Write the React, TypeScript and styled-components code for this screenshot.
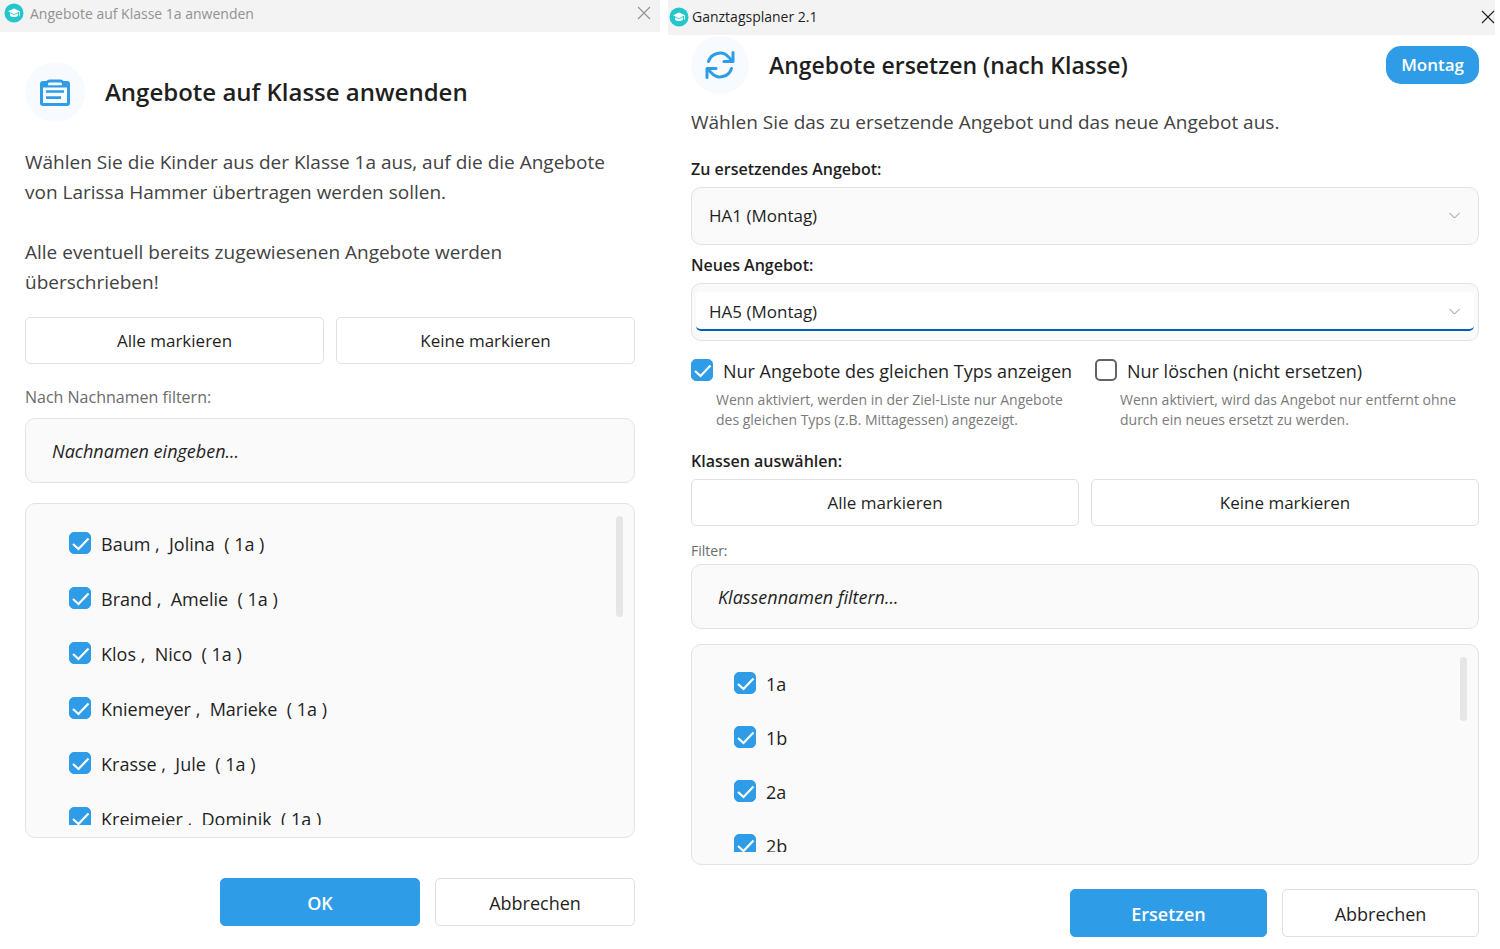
import React, { useState } from "react";
import styled, { createGlobalStyle, css } from "styled-components";

const GlobalStyle = createGlobalStyle`
  *, *::before, *::after { box-sizing: border-box; }
  body {
    margin: 0;
    background: #fff;
    color: #1f1f1f;
    font-family: "Segoe UI", "Open Sans", "Noto Sans", sans-serif;
  }
  button, input, select { font-family: inherit; color: inherit; }
  h1, p { margin: 0; }
`;

const blue = "#2e9ce6";

const Page = styled.main`
  display: grid;
  grid-template-columns: 660fr 827fr;
  gap: 8px;
  padding-right: 5px;
  align-items: start;
`;

const Window = styled.section`
  display: flex;
  flex-direction: column;
  min-width: 0;
`;

const TitleBar = styled.header<{ $active?: boolean }>`
  display: flex;
  align-items: center;
  height: ${(p) => (p.$active ? 35 : 32)}px;
  padding-left: ${(p) => (p.$active ? 1 : 4)}px;
  padding-right: ${(p) => (p.$active ? 0 : 9)}px;
  padding-bottom: ${(p) => (p.$active ? 2 : 6)}px;
  gap: ${(p) => (p.$active ? 3 : 6)}px;
  background: #f3f3f3;
  color: ${(p) => (p.$active ? "#1f1f1f" : "#929292")};
  font-size: 14px;
`;

const TitleText = styled.span`
  flex: 1;
`;

const CloseButton = styled.button`
  display: flex;
  padding: 0;
  border: 0;
  background: none;
`;

const Body = styled.div<{ $compact?: boolean }>`
  display: flex;
  flex-direction: column;
  padding: ${(p) => (p.$compact ? "1px 16px 12px 23px" : "30px 25px 23px")};
`;

const Heading = styled.div`
  display: flex;
  align-items: center;
  gap: 20px;
`;

const IconCircle = styled.div<{ $compact?: boolean }>`
  display: grid;
  place-items: center;
  width: ${(p) => (p.$compact ? 58 : 60)}px;
  height: ${(p) => (p.$compact ? 58 : 60)}px;
  border-radius: 50%;
  background: #f7fbff;
`;

const Title = styled.h1<{ $compact?: boolean }>`
  flex: 1;
  font-size: ${(p) => (p.$compact ? 23 : 24)}px;
  font-weight: 600;
  line-height: 32px;
`;

const DayBadge = styled.span`
  padding: 0 15px;
  border-radius: 15px;
  background: ${blue};
  color: #fff;
  font-size: 17px;
  font-weight: 600;
  line-height: 38px;
`;

const Message = styled.div<{ $compact?: boolean }>`
  display: grid;
  gap: 30px;
  margin: ${(p) => (p.$compact ? "13px 0 22px" : "25px 0 0")};
  color: #424242;
  font-size: 19px;
  line-height: 30px;
`;

const FieldLabel = styled.label`
  display: block;
  font-size: 16px;
  font-weight: 600;
  line-height: 20px;
  padding-bottom: 8px;
`;

const GroupLabel = styled(FieldLabel).attrs({ as: "div" })``;

const FilterLabel = styled.label<{ $small?: boolean }>`
  color: #6b6b6b;
  font-size: ${(p) => (p.$small ? 14 : 16)}px;
  line-height: 20px;
  margin-top: ${(p) => (p.$small ? 15 : 23)}px;
  padding-bottom: ${(p) => (p.$small ? 3 : 11)}px;
`;

const panel = css`
  border: 1px solid #e3e3e3;
  border-radius: 10px;
  background: #fafafa;
`;

const SelectFrame = styled.div<{ $focused?: boolean }>`
  ${panel}
  display: grid;
  grid-template-columns: 1fr;
  align-items: center;
  height: 58px;
  padding: 8px 4px 9px;
  margin-bottom: 10px;

  > * { grid-area: 1 / 1; }
  > svg { justify-self: end; margin-right: 14px; pointer-events: none; }
  > select {
    background: ${(p) => (p.$focused ? "#fff" : "transparent")};
    border-bottom: 2px solid ${(p) => (p.$focused ? "#005fb8" : "transparent")};
  }
`;

const Select = styled.select`
  appearance: none;
  width: 100%;
  height: 39px;
  padding: 2px 32px 0 13px;
  border: 0;
  border-radius: 5px;
  font-size: 17px;
  outline: none;
`;

const Options = styled.div`
  display: grid;
  grid-template-columns: 1fr 1fr;
  gap: 20px;
  margin: 6px 0 21px;
`;

const CheckLabel = styled.label`
  display: flex;
  align-items: center;
  gap: 10px;
  font-size: 18px;
  line-height: 28px;
  white-space: pre;
`;

const CheckFrame = styled.span`
  display: grid;
  width: 22px;
  height: 22px;
  margin-bottom: 2px;
  flex: none;
  > * { grid-area: 1 / 1; }
  > svg { pointer-events: none; }
`;

const CheckInput = styled.input`
  appearance: none;
  width: 22px;
  height: 22px;
  margin: 0;
  border: 2px solid #636363;
  border-radius: 5px;
  background: #fff;
  &:checked { border: 1px solid ${blue}; background: ${blue}; }
`;

const Hint = styled.p`
  padding-left: 25px;
  margin-top: 5px;
  color: #7a7a7a;
  font-size: 14px;
  line-height: 20px;
`;

const ButtonRow = styled.div<{ $spaced?: boolean }>`
  display: grid;
  grid-template-columns: 1fr 1fr;
  gap: 12px;
  margin-top: ${(p) => (p.$spaced ? 20 : 0)}px;
`;

const Button = styled.button<{ $primary?: boolean; $tall?: boolean }>`
  height: ${(p) => (p.$tall ? 48 : 47)}px;
  padding: ${(p) => (p.$tall ? "2px 0 0" : "0")};
  border: 1px solid ${(p) => (p.$primary ? blue : "#e0e0e0")};
  border-radius: 5px;
  background: ${(p) => (p.$primary ? blue : "#fff")};
  color: ${(p) => (p.$primary ? "#fff" : "#1f1f1f")};
  font-size: ${(p) => (p.$tall ? 18 : 17)}px;
  font-weight: ${(p) => (p.$primary ? 600 : 400)};
`;

const Footer = styled.footer<{ $compact?: boolean }>`
  display: grid;
  grid-template-columns: repeat(2, ${(p) => (p.$compact ? 197 : 200)}px);
  justify-content: end;
  gap: 15px;
  margin-top: ${(p) => (p.$compact ? 24 : 40)}px;
`;

const FilterInput = styled.input`
  ${panel}
  width: 100%;
  height: 65px;
  padding: 0 26px;
  font-size: 18px;
  outline: none;
  &::placeholder { color: #1f1f1f; opacity: 1; font-style: italic; }
`;

const ListPanel = styled.div<{ $compact?: boolean }>`
  ${panel}
  display: flex;
  height: ${(p) => (p.$compact ? 221 : 335)}px;
  margin-top: ${(p) => (p.$compact ? 15 : 20)}px;
  padding: 12px 11px;
`;

const List = styled.ul<{ $compact?: boolean }>`
  flex: 1;
  min-width: 0;
  margin: 0;
  padding: 0 0 0 ${(p) => (p.$compact ? 31 : 32)}px;
  overflow: hidden;
  list-style: none;
  li {
    display: flex;
    align-items: center;
    height: ${(p) => (p.$compact ? 54 : 55)}px;
  }
`;

const ScrollThumb = styled.div<{ $compact?: boolean }>`
  width: 7px;
  height: ${(p) => (p.$compact ? 64 : 101)}px;
  border-radius: 4px;
  background: #e6e6e6;
`;

const AppIcon = () => (
  <svg width="20" height="20" viewBox="0 0 20 20" aria-hidden="true">
    <circle cx="10" cy="10" r="9.5" fill="#22c7cb" />
    <path d="M10 5.4 4 8.3l6 2.9 6-2.9z" fill="#fff" />
    <path d="M6 10.2v2.4c1.5 2 6.500 2 8 0v-2.400l-4 1.900z" fill="#fff" />
    <path d="M15.500 8.500v4" stroke="#fff" strokeWidth="1" />
  </svg>
);

const CloseIcon = () => (
  <svg width="14" height="14" viewBox="0 0 14 14" fill="none" stroke="currentColor" strokeWidth="1.1" aria-hidden="true">
    <path d="M1 1l12 12M13 1 1 13" />
  </svg>
);

const ClipboardIcon = () => (
  <svg width="30" height="27" viewBox="0 0 30 27" fill="none" stroke={blue} aria-hidden="true">
    <rect x="1.500" y="3.500" width="27" height="22" rx="1.500" strokeWidth="3" />
    <path d="M1.500 3.500h27v5h-27z" fill={blue} stroke="none" />
    <path d="M7 6V4.500a3 3 0 0 1 3-3h10a3 3 0 0 1 3 3V6z" fill={blue} strokeWidth="2" />
    <path d="M8 6.200V5a1.500 1.500 0 0 1 1.500-1.500h11A1.500 1.500 0 0 1 22 5v1.200z" fill="#f7fbff" stroke="none" />
    <path d="M6 12.500h18M6 18.700h15" strokeWidth="2.700" />
  </svg>
);

const RefreshIcon = () => (
  <svg width="30" height="30" viewBox="0 0 30 30" fill="none" stroke={blue} strokeWidth="3" strokeLinecap="round" strokeLinejoin="round" aria-hidden="true">
    <path d="M3.500 11.500A11.800 11.800 0 0 1 23.500 7l4 4" />
    <path d="M28 2.500v9h-9" />
    <path d="M26.500 18.500A11.800 11.800 0 0 1 6.500 23l-4-4" />
    <path d="M2 27.500v-9h9" />
  </svg>
);

const Chevron = () => (
  <svg width="11" height="7" viewBox="0 0 11 7" fill="none" stroke="#8c8c8c" aria-hidden="true">
    <path d="M.5 1l5 5 5-5" />
  </svg>
);

function Checkbox({ label, checked = true }: { label: string; checked?: boolean }) {
  const [on, setOn] = useState(checked);
  return (
    <CheckLabel>
      <CheckFrame>
        <CheckInput type="checkbox" checked={on} onChange={(e) => setOn(e.target.checked)} />
        {on && (
          <svg viewBox="0 0 22 22" fill="none" stroke="#fff" strokeWidth="2.200" aria-hidden="true">
            <path d="M4 12l5.500 5L19.500 6.500" />
          </svg>
        )}
      </CheckFrame>
      {label}
    </CheckLabel>
  );
}

function CheckList({ items, compact }: { items: string[]; compact?: boolean }) {
  return (
    <ListPanel $compact={compact}>
      <List $compact={compact}>
        {items.map((item) => (
          <li key={item}>
            <Checkbox label={item} />
          </li>
        ))}
      </List>
      <ScrollThumb $compact={compact} />
    </ListPanel>
  );
}

const children = [
  ["Baum", "Jolina"],
  ["Brand", "Amelie"],
  ["Klos", "Nico"],
  ["Kniemeyer", "Marieke"],
  ["Krasse", "Jule"],
  ["Kreimeier", "Dominik"],
].map(([last, first]) => `${last} ,  ${first}  ( 1a )`);

function ApplyDialog() {
  return (
    <Window>
      <TitleBar>
        <AppIcon />
        <TitleText>Angebote auf Klasse 1a anwenden</TitleText>
        <CloseButton aria-label="Schließen"><CloseIcon /></CloseButton>
      </TitleBar>
      <Body>
        <Heading>
          <IconCircle><ClipboardIcon /></IconCircle>
          <Title>Angebote auf Klasse anwenden</Title>
        </Heading>
        <Message>
          <p>
            Wählen Sie die Kinder aus der Klasse 1a aus, auf die die Angebote<br />
            von Larissa Hammer übertragen werden sollen.
          </p>
          <p>
            Alle eventuell bereits zugewiesenen Angebote werden<br />
            überschrieben!
          </p>
        </Message>
        <ButtonRow $spaced>
          <Button>Alle markieren</Button>
          <Button>Keine markieren</Button>
        </ButtonRow>
        <FilterLabel htmlFor="lastname">Nach Nachnamen filtern:</FilterLabel>
        <FilterInput id="lastname" placeholder="Nachnamen eingeben..." />
        <CheckList items={children} />
        <Footer>
          <Button $primary $tall>OK</Button>
          <Button $tall>Abbrechen</Button>
        </Footer>
      </Body>
    </Window>
  );
}

function ReplaceDialog() {
  return (
    <Window>
      <TitleBar $active>
        <AppIcon />
        <TitleText>Ganztagsplaner 2.1</TitleText>
        <CloseButton aria-label="Schließen"><CloseIcon /></CloseButton>
      </TitleBar>
      <Body $compact>
        <Heading>
          <IconCircle $compact><RefreshIcon /></IconCircle>
          <Title $compact>Angebote ersetzen (nach Klasse)</Title>
          <DayBadge>Montag</DayBadge>
        </Heading>
        <Message $compact>
          <p>Wählen Sie das zu ersetzende Angebot und das neue Angebot aus.</p>
        </Message>
        <FieldLabel htmlFor="old">Zu ersetzendes Angebot:</FieldLabel>
        <SelectFrame>
          <Select id="old"><option>HA1 (Montag)</option></Select>
          <Chevron />
        </SelectFrame>
        <FieldLabel htmlFor="new">Neues Angebot:</FieldLabel>
        <SelectFrame $focused>
          <Select id="new"><option>HA5 (Montag)</option></Select>
          <Chevron />
        </SelectFrame>
        <Options>
          <div>
            <Checkbox label="Nur Angebote des gleichen Typs anzeigen" />
            <Hint>
              Wenn aktiviert, werden in der Ziel-Liste nur Angebote<br />
              des gleichen Typs (z.B. Mittagessen) angezeigt.
            </Hint>
          </div>
          <div>
            <Checkbox label="Nur löschen (nicht ersetzen)" checked={false} />
            <Hint>
              Wenn aktiviert, wird das Angebot nur entfernt ohne<br />
              durch ein neues ersetzt zu werden.
            </Hint>
          </div>
        </Options>
        <GroupLabel>Klassen auswählen:</GroupLabel>
        <ButtonRow>
          <Button>Alle markieren</Button>
          <Button>Keine markieren</Button>
        </ButtonRow>
        <FilterLabel htmlFor="classname" $small>Filter:</FilterLabel>
        <FilterInput id="classname" placeholder="Klassennamen filtern..." />
        <CheckList items={["1a", "1b", "2a", "2b"]} compact />
        <Footer $compact>
          <Button $primary $tall>Ersetzen</Button>
          <Button $tall>Abbrechen</Button>
        </Footer>
      </Body>
    </Window>
  );
}

export default function App() {
  return (
    <>
      <GlobalStyle />
      <Page>
        <ApplyDialog />
        <ReplaceDialog />
      </Page>
    </>
  );
}
